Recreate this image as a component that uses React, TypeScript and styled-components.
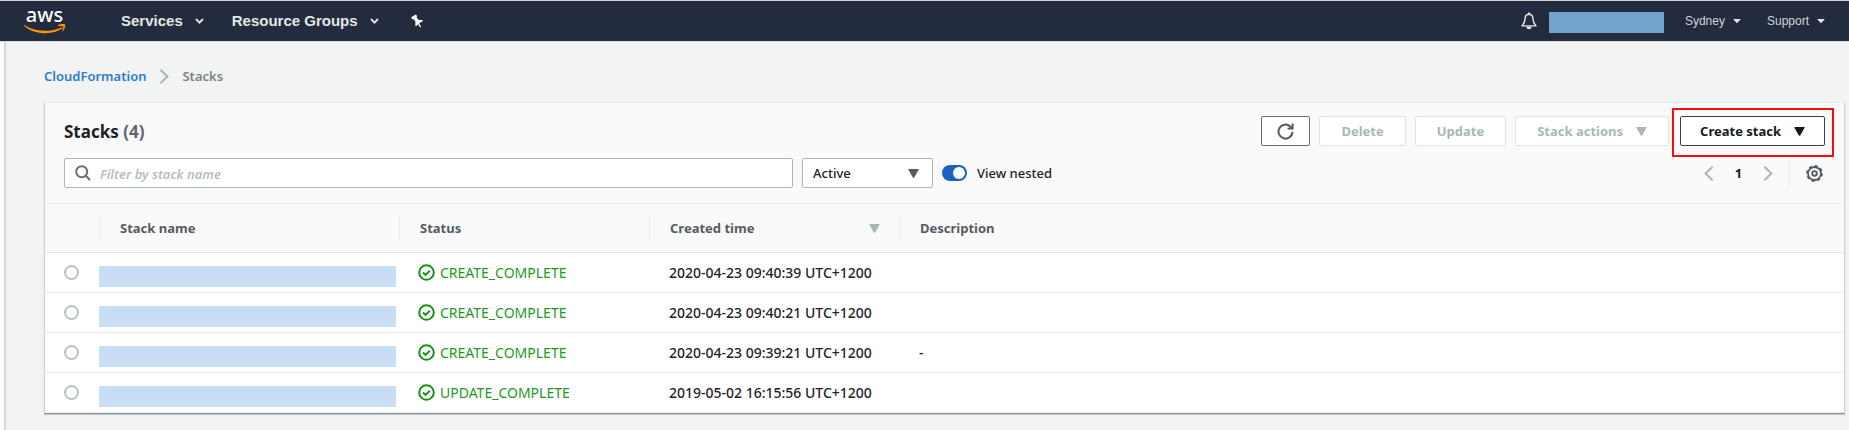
import React from "react";
import styled, { createGlobalStyle } from "styled-components";

const GlobalStyle = createGlobalStyle`
  * { box-sizing: border-box; }
  html, body, #root { min-height: 100vh; }
  body {
    margin: 0;
    background: #f2f3f3;
    color: #1f222b;
    font-family: "Noto Sans", sans-serif;
    font-size: 14px;
    line-height: 20px;
  }
  #root { display: flex; flex-direction: column; }
  button, input, select { font-family: inherit; }
`;

const NavBar = styled.header`
  display: flex;
  align-items: center;
  height: 42px;
  padding: 0 24px;
  background: #232c3f;
  border-top: 1px solid #cfd2d0;
  border-bottom: 1px solid #d5dbdb;
  font-family: "Liberation Sans", sans-serif;
`;

const LogoLink = styled.a`
  display: flex;
  margin-right: 55px;
`;

const NavButton = styled.button<{ $strong?: boolean; $after?: number }>`
  display: flex;
  align-items: center;
  gap: ${(p) => (p.$strong ? 12 : 8)}px;
  margin: 0 ${(p) => p.$after ?? 0}px 0 0;
  padding: 0;
  border: 0;
  background: none;
  color: ${(p) => (p.$strong ? "#e6e6e6" : "#d0d2d6")};
  font-size: ${(p) => (p.$strong ? 15 : 12)}px;
  font-weight: ${(p) => (p.$strong ? 700 : 400)};
  line-height: 20px;
`;

const NavEnd = styled.div`
  display: flex;
  align-items: center;
  margin-left: auto;
`;

const AccountBlock = styled.div`
  width: 115px;
  height: 21px;
  margin: 2px 21px 0 0;
  background: #70a4cc;
`;

const Shell = styled.div`
  display: flex;
  flex: 1;
`;

const SideEdge = styled.div`
  width: 6px;
  background: #fff;
  border-right: 2px solid #d5d9d9;
`;

const Main = styled.main`
  flex: 1;
  min-width: 0;
  padding: 24px 4px 16px 38px;
`;

const Breadcrumbs = styled.nav`
  display: flex;
  align-items: center;
  gap: 13px;
  height: 20px;
  margin-bottom: 16px;
  color: #7a8288;
  font-size: 13px;
  font-weight: 600;

  a {
    color: #2e7bcf;
    text-decoration: none;
  }
`;

const Card = styled.section`
  background: #fff;
  border: 1px solid #e8ebeb;
  border-left-color: #cdd3d4;
  border-right-color: #cdd3d4;
  border-bottom-color: #879596;
  box-shadow: 0 1px 1px #c3c9ca;
`;

const CardHeader = styled.div`
  display: flex;
  flex-direction: column;
  gap: 12px;
  padding: 13px 19px 15px 19px;
  background: #fafafa;
  border-bottom: 1px solid #eaeded;
`;

const TitleRow = styled.div`
  display: flex;
  align-items: center;
  justify-content: space-between;
`;

const Title = styled.h1`
  margin: 0;
  padding-top: 2px;
  font-size: 17px;
  line-height: 24px;
  font-weight: 700;

  span { color: #5f666e; }
`;

const Actions = styled.div`
  display: flex;
  gap: 9px;
`;

const Button = styled.button<{ $tone?: "icon" | "primary" }>`
  display: flex;
  align-items: center;
  justify-content: center;
  gap: 13px;
  height: 30px;
  padding: 0 ${(p) => (p.$tone === "icon" ? 15 : p.$tone === "primary" ? 19 : 21)}px;
  border: 1px solid ${(p) => (p.$tone === "primary" ? "#3c4047" : "#687078")};
  border-radius: 2px;
  background: #fff;
  color: ${(p) => (p.$tone === "primary" ? "#16191f" : "#545b64")};
  font-size: 13px;
  font-weight: 700;
  line-height: 20px;

  &:disabled {
    border-color: #dde2e2;
    color: #aab7b8;
  }
`;

const Highlighted = styled.div`
  position: relative;
  margin-left: 2px;

  &::after {
    content: "";
    position: absolute;
    inset: -8px -9px -11px -8px;
    border: 2px solid #f80c0c;
    pointer-events: none;
  }
`;

const FilterRow = styled.div`
  display: flex;
  align-items: center;
  gap: 9px;
`;

const SearchBox = styled.label`
  display: flex;
  align-items: center;
  flex: 0 1 729px;
  gap: 9px;
  height: 30px;
  padding: 0 10px;
  border: 1px solid #aab7b8;
  border-radius: 2px;
  background: #fff;

  svg { flex: none; }

  input {
    flex: 1;
    min-width: 0;
    padding: 2px 0 0;
    border: 0;
    outline: 0;
    background: none;
    font-size: 13px;
    font-weight: 600;
    line-height: 20px;
  }

  input::placeholder {
    color: #b4c0c1;
    font-style: italic;
    opacity: 1;
  }
`;

const SelectBox = styled.div`
  display: grid;
  align-items: center;
  width: 131px;

  > * { grid-area: 1 / 1; }

  select {
    appearance: none;
    height: 30px;
    padding: 0 30px 0 10px;
    border: 1px solid #aab7b8;
    border-radius: 2px;
    background: #fff;
    color: #1f222b;
    font-size: 13px;
    font-weight: 500;
  }

  svg {
    justify-self: end;
    margin-right: 14px;
    pointer-events: none;
  }
`;

const Toggle = styled.label`
  display: flex;
  align-items: center;
  gap: 10px;
  font-size: 13px;
  font-weight: 500;

  input {
    appearance: none;
    display: flex;
    align-items: center;
    width: 25px;
    height: 16px;
    margin: 0;
    padding: 0 2px;
    border-radius: 8px;
    background: #879596;
  }

  input::before {
    content: "";
    width: 12px;
    height: 12px;
    border-radius: 50%;
    background: #fff;
  }

  input:checked {
    justify-content: flex-end;
    background: #1b62c0;
  }
`;

const Pager = styled.div`
  display: flex;
  align-items: center;
  margin-left: auto;
`;

const PageButton = styled.button<{ $current?: boolean }>`
  display: flex;
  justify-content: center;
  width: ${(p) => (p.$current ? 49 : 10)}px;
  padding: 0;
  border: 0;
  background: none;
  color: #16191f;
  font-size: 13px;
  font-weight: 700;
  line-height: 20px;
`;

const SettingsButton = styled.button`
  display: flex;
  align-items: center;
  height: 30px;
  margin-left: 16px;
  padding: 0 2px 0 16px;
  border: 0;
  border-left: 1px solid #eaeded;
  background: none;
`;

const Table = styled.table`
  width: 100%;
  table-layout: fixed;
  border-collapse: separate;
  border-spacing: 0;

  th {
    height: 49px;
    padding: 0;
    background: #fafafa;
    border-bottom: 1px solid #eaeded;
    color: #545b64;
    font-size: 13px;
    font-weight: 700;
    text-align: left;
  }

  td {
    height: 40px;
    padding: 0 20px;
    border-bottom: 1px solid #eaeded;
    font-weight: 500;
  }
`;

const HeadLabel = styled.div`
  display: flex;
  align-items: center;
  justify-content: space-between;
  height: 24px;
  padding: 0 19px 0 20px;
  border-left: 1px solid #eaeded;
`;

const Col = styled.col<{ $width?: number }>`
  width: ${(p) => (p.$width ? `${p.$width}px` : "auto")};
`;

const RadioCell = styled.td`
  && { padding: 0 0 1px 19px; }

  input {
    appearance: none;
    display: block;
    width: 15px;
    height: 15px;
    margin: 0;
    border: 2px solid #b9c3c4;
    border-radius: 50%;
    background: #fff;
  }
`;

const NameCell = styled.td`
  && { padding: 13px 3px 5px 0; }
`;

const NameBlock = styled.div`
  height: 21px;
  background: #c9def4;
`;

const StatusCell = styled.td`
  && { padding-left: 19px; }
`;

const Status = styled.span`
  display: flex;
  align-items: center;
  gap: 5px;
  color: #1d9a1f;
  font-weight: 400;
`;

const Chevron = () => (
  <svg width="9" height="6" viewBox="0 0 9 6" aria-hidden="true">
    <path d="M1 1l3.5 3.6L8 1" fill="none" stroke="#e6e6e6" strokeWidth="1.8" />
  </svg>
);

const Triangle = ({ color, small }: { color: string; small?: boolean }) => (
  <svg width={small ? 8 : 11} height={small ? 4 : 9} viewBox="0 0 11 9" preserveAspectRatio="none" aria-hidden="true">
    <path d="M0.8 0h9.4q.8 0 .4.8L6.2 8.4q-.7.9-1.4 0L.4.8Q0 0 .8 0z" fill={color} />
  </svg>
);

const Angle = ({ left }: { left?: boolean }) => (
  <svg width="10" height="15" viewBox="0 0 10 15" aria-hidden="true">
    <path d={left ? "M8.6 0.8L1.6 7.5l7 6.7" : "M1.4 0.8l7 6.7-7 6.7"} fill="none" stroke="#aab7b8" strokeWidth="2" />
  </svg>
);

const AwsLogo = () => (
  <svg width="42" height="40" viewBox="0 0 42 40" role="img" aria-label="aws">
    <text x="20.5" y="21" textAnchor="middle" fill="#fff" fontFamily="Noto Sans, sans-serif" fontSize="20" fontWeight="500">
      aws
    </text>
    <g transform="translate(0 4)">
      <path d="M.6 20.2C11 27 27 27.600 37.200 22.400c.9-.4 1.500.6.8 1.200C28.500 30.400 10 29.800.3 20.900c-.5-.5-.2-1 .3-.7z" fill="#f90" />
      <path d="M34 20.100c2.200-1.500 6.300-1.400 7-.6.7.9-.3 4.900-2.100 6.700-.4.300-.8.100-.6-.4.600-1.400 1.300-3.700.9-4.300-.5-.6-3-.5-4.800-.6-.6 0-.8-.5-.4-.8z" fill="#f90" />
    </g>
  </svg>
);

const Pin = () => (
  <svg width="14" height="14" viewBox="0 0 14 14" aria-hidden="true">
    <path d="M1.200 3.200L5.800.6l1.400 1.500-.7 1.500 2.300 2.300 3.600.2.300 1.200-3.200 1.700-3 2.900-1.300-.5.300-3.300L3.900 5.200l-1.900.1z" fill="#fff" />
    <path d="M8 8.500l2.600 4.600" stroke="#fff" strokeWidth="1.300" />
  </svg>
);

const Bell = () => (
  <svg width="16" height="18" viewBox="0 0 16 18" aria-hidden="true">
    <path d="M8 2.200c-2.500 0-3.800 1.800-3.900 4.200C4 9.600 3.200 11.400 1 13.900h14c-2.200-2.500-3-4.300-3.100-7.500C11.800 4 10.500 2.200 8 2.200z" fill="none" stroke="#e3e5e8" strokeWidth="1.400" strokeLinejoin="round" />
    <path d="M8 .4v2" stroke="#e3e5e8" strokeWidth="1.800" />
    <path d="M5.400 14.500h5.200a2.600 2.700 0 0 1-5.200 0z" fill="#e3e5e8" />
  </svg>
);

const Refresh = () => (
  <svg width="17" height="17" viewBox="0 0 17 17" aria-hidden="true">
    <path d="M15.500 8.900a7 7 0 1 1-2.200-5.400L15 5.100" fill="none" stroke="#545b64" strokeWidth="2" />
    <path d="M15.600.5v5.100h-5" fill="none" stroke="#545b64" strokeWidth="2" />
  </svg>
);

const Magnifier = () => (
  <svg width="16" height="16" viewBox="0 0 16 16" aria-hidden="true">
    <circle cx="6.700" cy="6.700" r="5.500" fill="none" stroke="#687078" strokeWidth="2" />
    <path d="M10.700 10.700l4.300 4.300" stroke="#687078" strokeWidth="2" />
  </svg>
);

const Gear = () => (
  <svg width="17" height="17" viewBox="0 0 17 17" aria-hidden="true">
    <circle cx="8.500" cy="8.500" r="7.500" fill="none" stroke="#545b64" strokeWidth="1.800" strokeDasharray="2.945 2.945" />
    <circle cx="8.500" cy="8.500" r="6.500" fill="none" stroke="#545b64" strokeWidth="1.800" />
    <circle cx="8.500" cy="8.500" r="2.300" fill="none" stroke="#545b64" strokeWidth="1.800" />
  </svg>
);

const Check = () => (
  <svg width="17" height="17" viewBox="0 0 17 17" aria-hidden="true">
    <circle cx="8.500" cy="8.500" r="7.300" fill="none" stroke="#149416" strokeWidth="2" />
    <path d="M5 8.600l2.500 2.300 4.300-4.100" fill="none" stroke="#149416" strokeWidth="2" />
  </svg>
);

const stacks = [
  { status: "CREATE_COMPLETE", created: "2020-04-23 09:40:39 UTC+1200", description: "" },
  { status: "CREATE_COMPLETE", created: "2020-04-23 09:40:21 UTC+1200", description: "" },
  { status: "CREATE_COMPLETE", created: "2020-04-23 09:39:21 UTC+1200", description: "-" },
  { status: "UPDATE_COMPLETE", created: "2019-05-02 16:15:56 UTC+1200", description: "" },
];

export default function App() {
  return (
    <>
      <GlobalStyle />
      <NavBar>
        <LogoLink href="#home"><AwsLogo /></LogoLink>
        <NavButton $strong $after={28}>Services <Chevron /></NavButton>
        <NavButton $strong $after={31}>Resource Groups <Chevron /></NavButton>
        <NavButton aria-label="Pin shortcuts"><Pin /></NavButton>
        <NavEnd>
          <NavButton $after={12} aria-label="Notifications"><Bell /></NavButton>
          <AccountBlock />
          <NavButton $after={26}>Sydney <Triangle small color="#e6e6e6" /></NavButton>
          <NavButton>Support <Triangle small color="#e6e6e6" /></NavButton>
        </NavEnd>
      </NavBar>
      <Shell>
        <SideEdge />
        <Main>
          <Breadcrumbs aria-label="Breadcrumb">
            <a href="#cloudformation">CloudFormation</a>
            <Angle />
            <span>Stacks</span>
          </Breadcrumbs>
          <Card>
            <CardHeader>
              <TitleRow>
                <Title>Stacks <span>(4)</span></Title>
                <Actions>
                  <Button $tone="icon" aria-label="Refresh"><Refresh /></Button>
                  <Button disabled>Delete</Button>
                  <Button disabled>Update</Button>
                  <Button disabled>Stack actions <Triangle color="#aab7b8" /></Button>
                  <Highlighted>
                    <Button $tone="primary">Create stack <Triangle color="#16191f" /></Button>
                  </Highlighted>
                </Actions>
              </TitleRow>
              <FilterRow>
                <SearchBox>
                  <Magnifier />
                  <input type="text" placeholder="Filter by stack name" aria-label="Filter by stack name" />
                </SearchBox>
                <SelectBox>
                  <select aria-label="Stack status" defaultValue="Active">
                    <option>Active</option>
                  </select>
                  <Triangle color="#545b64" />
                </SelectBox>
                <Toggle>
                  <input type="checkbox" role="switch" defaultChecked />
                  View nested
                </Toggle>
                <Pager>
                  <PageButton aria-label="Previous page"><Angle left /></PageButton>
                  <PageButton $current>1</PageButton>
                  <PageButton aria-label="Next page"><Angle /></PageButton>
                  <SettingsButton aria-label="Preferences"><Gear /></SettingsButton>
                </Pager>
              </FilterRow>
            </CardHeader>
            <Table>
              <colgroup>
                <Col $width={54} />
                <Col $width={300} />
                <Col $width={250} />
                <Col $width={250} />
                <Col />
              </colgroup>
              <thead>
                <tr>
                  <th aria-label="Selection" />
                  <th><HeadLabel>Stack name</HeadLabel></th>
                  <th><HeadLabel>Status</HeadLabel></th>
                  <th><HeadLabel>Created time <Triangle color="#aab7b8" /></HeadLabel></th>
                  <th><HeadLabel>Description</HeadLabel></th>
                </tr>
              </thead>
              <tbody>
                {stacks.map((stack, i) => (
                  <tr key={stack.created}>
                    <RadioCell>
                      <input type="radio" name="stack" aria-label={`Select stack ${i + 1}`} />
                    </RadioCell>
                    <NameCell><NameBlock /></NameCell>
                    <StatusCell><Status><Check />{stack.status}</Status></StatusCell>
                    <td>{stack.created}</td>
                    <td>{stack.description}</td>
                  </tr>
                ))}
              </tbody>
            </Table>
          </Card>
        </Main>
      </Shell>
    </>
  );
}
